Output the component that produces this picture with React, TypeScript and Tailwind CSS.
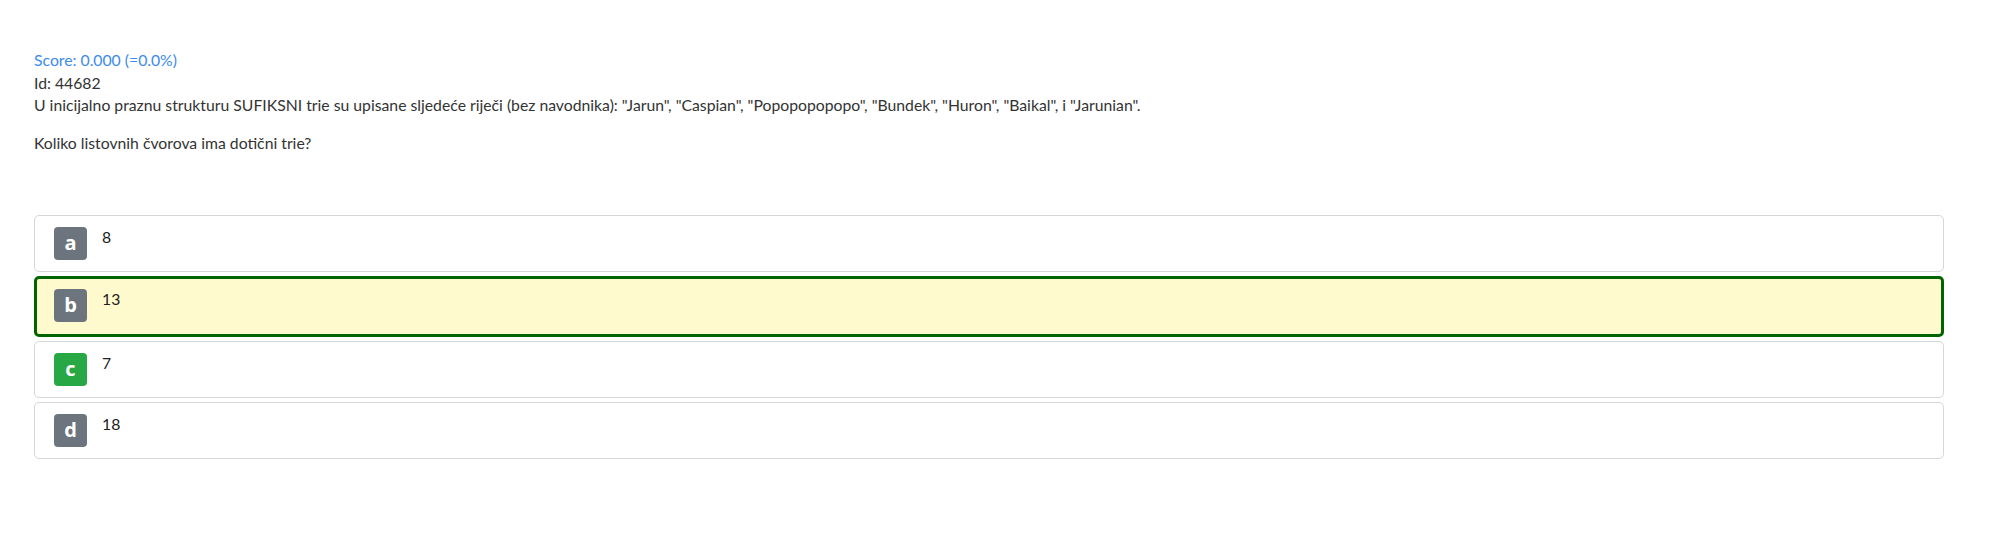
const options = [
  { letter: 'a', text: '8', state: 'normal' },
  { letter: 'b', text: '13', state: 'selected' },
  { letter: 'c', text: '7', state: 'correct' },
  { letter: 'd', text: '18', state: 'normal' },
]

function Option({ letter, text, state }: { letter: string; text: string; state: string }) {
  const selected = state === 'selected'
  return (
    <div
      className={
        selected
          ? 'flex h-[61px] items-start rounded-[5px] border-[3px] border-[#006400] bg-[#fffacd] pl-[17px] pt-[9px]'
          : 'flex h-[57px] items-start rounded-[5px] border border-[#d6d6d6] bg-white pl-[19px] pt-[10px]'
      }
    >
      <span
        className={
          "mt-px flex h-[33px] w-[33px] items-center justify-center rounded-[4px] pb-px font-['Open_Sans',sans-serif] text-[20px] font-bold leading-none text-white " +
          (state === 'correct' ? 'bg-[#28a745]' : 'bg-[#6c757d]')
        }
      >
        {letter}
      </span>
      <span className="ml-[15px] leading-[22px] text-[#222]">{text}</span>
    </div>
  )
}

export default function App() {
  return (
    <div className="h-[559px] w-full bg-white pl-[34px] pr-[56px] pt-[49px] font-['Lato','Noto_Sans',sans-serif] text-[15.75px] leading-[22px] text-[#333]">
      <div className="mb-px text-[#3b8bef]">Score: 0.000 (=0.0%)</div>
      <div>Id: 44682</div>
      <p className="mb-4">
        U inicijalno praznu strukturu SUFIKSNI trie su upisane sljedeće riječi (bez navodnika): "Jarun", "Caspian",
        "Popopopopopo", "Bundek", "Huron", "Baikal", i "Jarunian".
      </p>
      <p>Koliko listovnih čvorova ima dotični trie?</p>

      <div className="mt-[61px] flex flex-col gap-[4px]">
        {options.map((o) => (
          <Option key={o.letter} {...o} />
        ))}
      </div>
    </div>
  )
}
